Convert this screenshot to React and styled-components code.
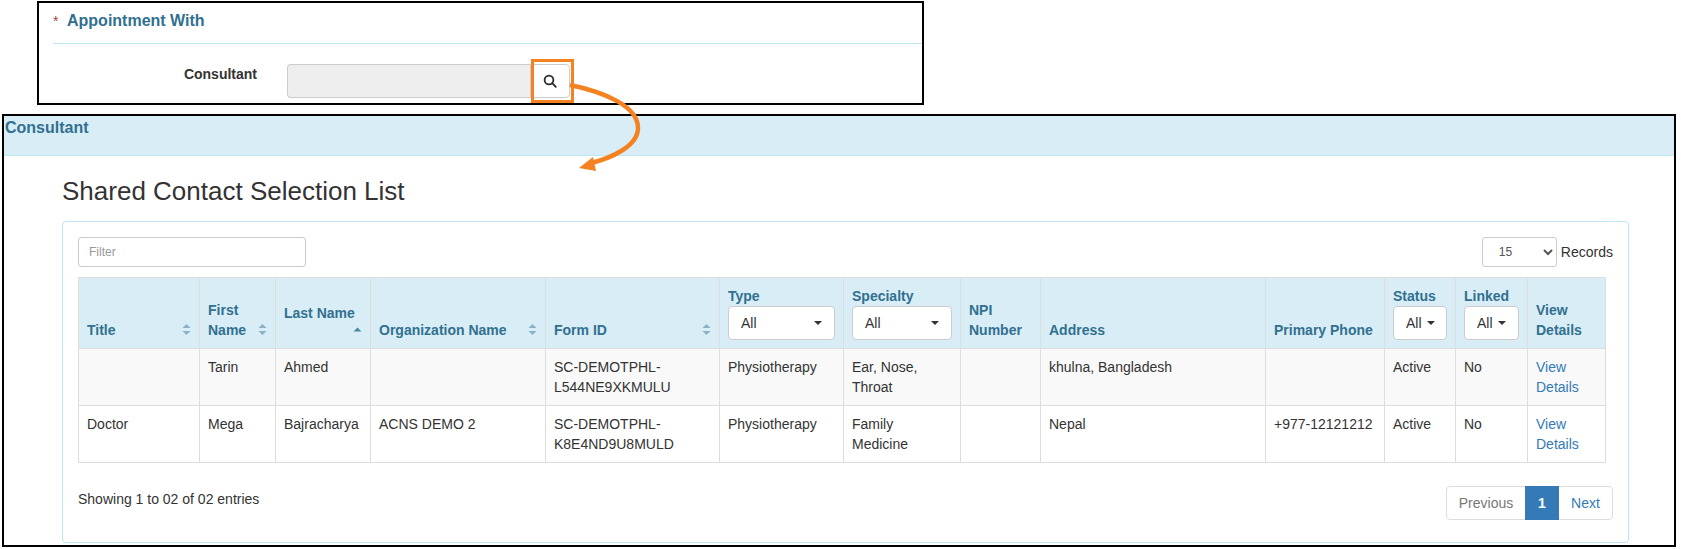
import React from "react";
import styled, { createGlobalStyle } from "styled-components";

const columns = [121, 76, 95, 175, 174, 124, 117, 80, 225, 119, 71, 72, 78];

const rows = [
  {
    title: "",
    first: "Tarin",
    last: "Ahmed",
    org: "",
    formId: ["SC-DEMOTPHL-", "L544NE9XKMULU"],
    type: "Physiotherapy",
    specialty: ["Ear, Nose,", "Throat"],
    address: "khulna, Bangladesh",
    phone: "",
  },
  {
    title: "Doctor",
    first: "Mega",
    last: "Bajracharya",
    org: "ACNS DEMO 2",
    formId: ["SC-DEMOTPHL-", "K8E4ND9U8MULD"],
    type: "Physiotherapy",
    specialty: ["Family", "Medicine"],
    address: "Nepal",
    phone: "+977-12121212",
  },
];

const Lines = ({ items }) =>
  items.map((item, i) => (
    <React.Fragment key={item}>
      {i > 0 && <br />}
      {item}
    </React.Fragment>
  ));

const SortIcon = ({ asc }) => (
  <SortMark width="9" height="13" viewBox="0 0 9 13" $asc={asc}>
    {asc ? (
      <path d="M4.5 4.5 L8.5 8.5 H0.5 Z" />
    ) : (
      <>
        <path d="M4.5 1 L8.5 5 H0.5 Z" />
        <path d="M4.5 12 L8.5 8 H0.5 Z" />
      </>
    )}
  </SortMark>
);

const App = () => {
  return (
    <Page>
      <GlobalStyle />
      <TopBox>
        <SectionTitle>
          <Required>*</Required>
          Appointment With
        </SectionTitle>
        <FormRow>
          <FieldLabel>Consultant</FieldLabel>
          <InputGroup>
            <ReadonlyInput disabled />
            <SearchButton>
              <svg width="14" height="14" viewBox="0 0 14 14" fill="none" stroke="#2b2b2b" strokeWidth="1.8">
                <circle cx="6" cy="6" r="4.4" />
                <path d="M9.2 9.2 L12.8 12.8" strokeLinecap="round" />
              </svg>
            </SearchButton>
            <Highlight />
          </InputGroup>
        </FormRow>
      </TopBox>

      <ModalBox>
        <ModalHeader>Consultant</ModalHeader>
        <ModalBody>
          <Heading>Shared Contact Selection List</Heading>
          <Panel>
            <Toolbar>
              <FilterInput placeholder="Filter" />
              <RecordsWrap>
                <RecordsSelect defaultValue="15">
                  <option value="15">15</option>
                </RecordsSelect>
                Records
              </RecordsWrap>
            </Toolbar>

            <Table>
              <colgroup>
                {columns.map((w, i) => (
                  <col key={i} width={w} />
                ))}
              </colgroup>
              <thead>
                <tr>
                  <Th>Title<SortIcon /></Th>
                  <Th>First<br />Name<SortIcon /></Th>
                  <Th $raised>Last Name<SortIcon asc /><br />&nbsp;</Th>
                  <Th>Organization Name<SortIcon /></Th>
                  <Th>Form ID<SortIcon /></Th>
                  <Th>
                    Type
                    <WideFilter><span>All</span><Caret /></WideFilter>
                  </Th>
                  <Th>
                    Specialty
                    <WideFilter><span>All</span><Caret /></WideFilter>
                  </Th>
                  <Th>NPI<br />Number</Th>
                  <Th>Address</Th>
                  <Th>Primary Phone</Th>
                  <Th>
                    Status
                    <SmallFilter><span>All</span><Caret /></SmallFilter>
                  </Th>
                  <Th>
                    Linked
                    <SmallFilter><span>All</span><Caret /></SmallFilter>
                  </Th>
                  <Th>View<br />Details</Th>
                </tr>
              </thead>
              <tbody>
                {rows.map((row) => (
                  <Row key={row.formId[1]}>
                    <Td>{row.title}</Td>
                    <Td>{row.first}</Td>
                    <Td>{row.last}</Td>
                    <Td>{row.org}</Td>
                    <Td><Lines items={row.formId} /></Td>
                    <Td>{row.type}</Td>
                    <Td><Lines items={row.specialty} /></Td>
                    <Td></Td>
                    <Td>{row.address}</Td>
                    <Td>{row.phone}</Td>
                    <Td>Active</Td>
                    <Td>No</Td>
                    <Td><DetailsLink href="#">View<br />Details</DetailsLink></Td>
                  </Row>
                ))}
              </tbody>
            </Table>

            <Footer>
              <Showing>Showing 1 to 02 of 02 entries</Showing>
              <Pagination>
                <PageItem $width={78} $muted>Previous</PageItem>
                <PageItem $width={34} $active>1</PageItem>
                <PageItem $width={53}>Next</PageItem>
              </Pagination>
            </Footer>
          </Panel>
        </ModalBody>
      </ModalBox>

      <ArrowOverlay width="1681" height="549" viewBox="0 0 1681 549" fill="none">
        <path
          d="M570 85 C604 92 638 106 638 128 C638 146 612 158 588 164"
          stroke="#f58220"
          strokeWidth="4.5"
        />
        <path d="M579 168 L593 157 L596 171 Z" fill="#f58220" />
      </ArrowOverlay>
    </Page>
  );
};

const GlobalStyle = createGlobalStyle`
  html, body {
    margin: 0;
    padding: 0;
    background: #fff;
  }
  body {
    font-family: "Liberation Sans", Arial, sans-serif;
    font-size: 14px;
    line-height: 20px;
    color: #333;
  }
  * {
    box-sizing: border-box;
  }
`;

const Page = styled.div`
  position: relative;
  width: 1681px;
  height: 549px;
  padding-top: 1px;
  overflow: hidden;
`;

const TopBox = styled.section`
  width: 887px;
  height: 104px;
  margin-left: 37px;
  padding: 0 0 0 14px;
  border: 2px solid #000;
`;

const SectionTitle = styled.h4`
  height: 41px;
  margin: 0;
  padding: 8px 0 0 0;
  font-size: 16px;
  font-weight: bold;
  line-height: 20px;
  color: #31708f;
  border-bottom: 1px solid #bce8f1;
`;

const Required = styled.span`
  display: inline-block;
  width: 14px;
  font-size: 14px;
  font-weight: normal;
  color: #a94442;
`;

const FormRow = styled.div`
  display: flex;
  gap: 30px;
  margin-top: 20px;
`;

const FieldLabel = styled.label`
  width: 204px;
  font-weight: bold;
  text-align: right;
  color: #333;
`;

const InputGroup = styled.div`
  position: relative;
  display: flex;
  width: 283px;
  height: 34px;
`;

const ReadonlyInput = styled.input`
  flex: 1;
  min-width: 0;
  background: #eee;
  border: 1px solid #ccc;
  border-right: 0;
  border-radius: 4px 0 0 4px;
`;

const SearchButton = styled.button`
  display: flex;
  align-items: center;
  justify-content: center;
  width: 40px;
  padding: 0;
  background: #fff;
  border: 1px solid #ccc;
  border-radius: 0 4px 4px 0;
`;

const Highlight = styled.div`
  position: absolute;
  top: -5px;
  right: -4px;
  width: 43px;
  height: 44px;
  border: 3px solid #f58220;
`;

const ModalBox = styled.section`
  width: 1674px;
  height: 433px;
  margin: 9px 0 0 2px;
  border: 2px solid #000;
`;

const ModalHeader = styled.header`
  height: 40px;
  padding: 2px 0 0 1px;
  font-size: 16px;
  font-weight: bold;
  line-height: 20px;
  color: #31708f;
  background: #d9edf7;
  border-bottom: 1px solid #bce8f1;
`;

const ModalBody = styled.div`
  padding: 0 0 0 58px;
`;

const Heading = styled.h3`
  margin: 22px 0 17px;
  font-size: 26px;
  font-weight: normal;
  line-height: 26px;
  color: #333;
`;

const Panel = styled.div`
  width: 1567px;
  height: 322px;
  padding: 15px;
  background: #fff;
  border: 1px solid #bce8f1;
  border-radius: 4px;
`;

const Toolbar = styled.div`
  display: flex;
  align-items: center;
  justify-content: space-between;
  height: 30px;
  margin-bottom: 10px;
`;

const FilterInput = styled.input`
  width: 228px;
  height: 30px;
  padding: 0 10px;
  font-family: inherit;
  font-size: 12px;
  color: #555;
  border: 1px solid #ccc;
  border-radius: 3px;

  &::placeholder {
    color: #999;
    opacity: 1;
  }
`;

const RecordsWrap = styled.label`
  display: flex;
  align-items: center;
  gap: 4px;
`;

const RecordsSelect = styled.select`
  width: 75px;
  height: 30px;
  padding: 0 0 0 12px;
  font-family: inherit;
  font-size: 12px;
  color: #555;
  background: #fff;
  border: 1px solid #ccc;
  border-radius: 3px;
`;

const Table = styled.table`
  width: 1527px;
  table-layout: fixed;
  border-collapse: collapse;
`;

const Th = styled.th`
  position: relative;
  height: 70px;
  padding: 8px;
  font-weight: bold;
  text-align: left;
  vertical-align: bottom;
  color: #31708f;
  background: #d9edf7;
  border: 1px solid #ddd;
  ${(props) => props.$raised && "padding-bottom: 5px;"}
`;

const SortMark = styled.svg`
  position: absolute;
  right: 8px;
  bottom: 12px;
  fill: ${(props) => (props.$asc ? "#4d87a6" : "#8db0c4")};
`;

const FilterButton = styled.button`
  display: flex;
  align-items: center;
  width: 100%;
  height: 34px;
  padding: 0 12px;
  font-family: inherit;
  font-size: 14px;
  color: #333;
  background: #fff;
  border: 1px solid #ccc;
  border-radius: 4px;
`;

const WideFilter = styled(FilterButton)`
  justify-content: space-between;
`;

const SmallFilter = styled(FilterButton)`
  gap: 5px;
`;

const Caret = styled.i`
  display: block;
  width: 0;
  height: 0;
  border-top: 4px solid #333;
  border-right: 4px solid transparent;
  border-left: 4px solid transparent;
`;

const Row = styled.tr`
  height: 57px;

  &:nth-child(odd) {
    background: #f9f9f9;
  }
`;

const Td = styled.td`
  padding: 8px;
  vertical-align: top;
  border: 1px solid #ddd;
`;

const DetailsLink = styled.a`
  color: #337ab7;
  text-decoration: none;
`;

const Footer = styled.div`
  display: flex;
  justify-content: space-between;
  margin-top: 23px;
`;

const Showing = styled.div`
  padding-top: 3px;
`;

const Pagination = styled.nav`
  display: flex;
  height: 34px;
  border: 1px solid #ddd;
  border-radius: 4px;
`;

const PageItem = styled.a`
  display: flex;
  align-items: center;
  justify-content: center;
  width: ${(props) => props.$width}px;
  margin: -1px 0;
  font-weight: ${(props) => (props.$active ? "bold" : "normal")};
  color: ${(props) => (props.$active ? "#fff" : props.$muted ? "#777" : "#337ab7")};
  background: ${(props) => (props.$active ? "#337ab7" : "transparent")};
`;

const ArrowOverlay = styled.svg`
  position: absolute;
  top: 0;
  left: 0;
  pointer-events: none;
`;

export default App;
